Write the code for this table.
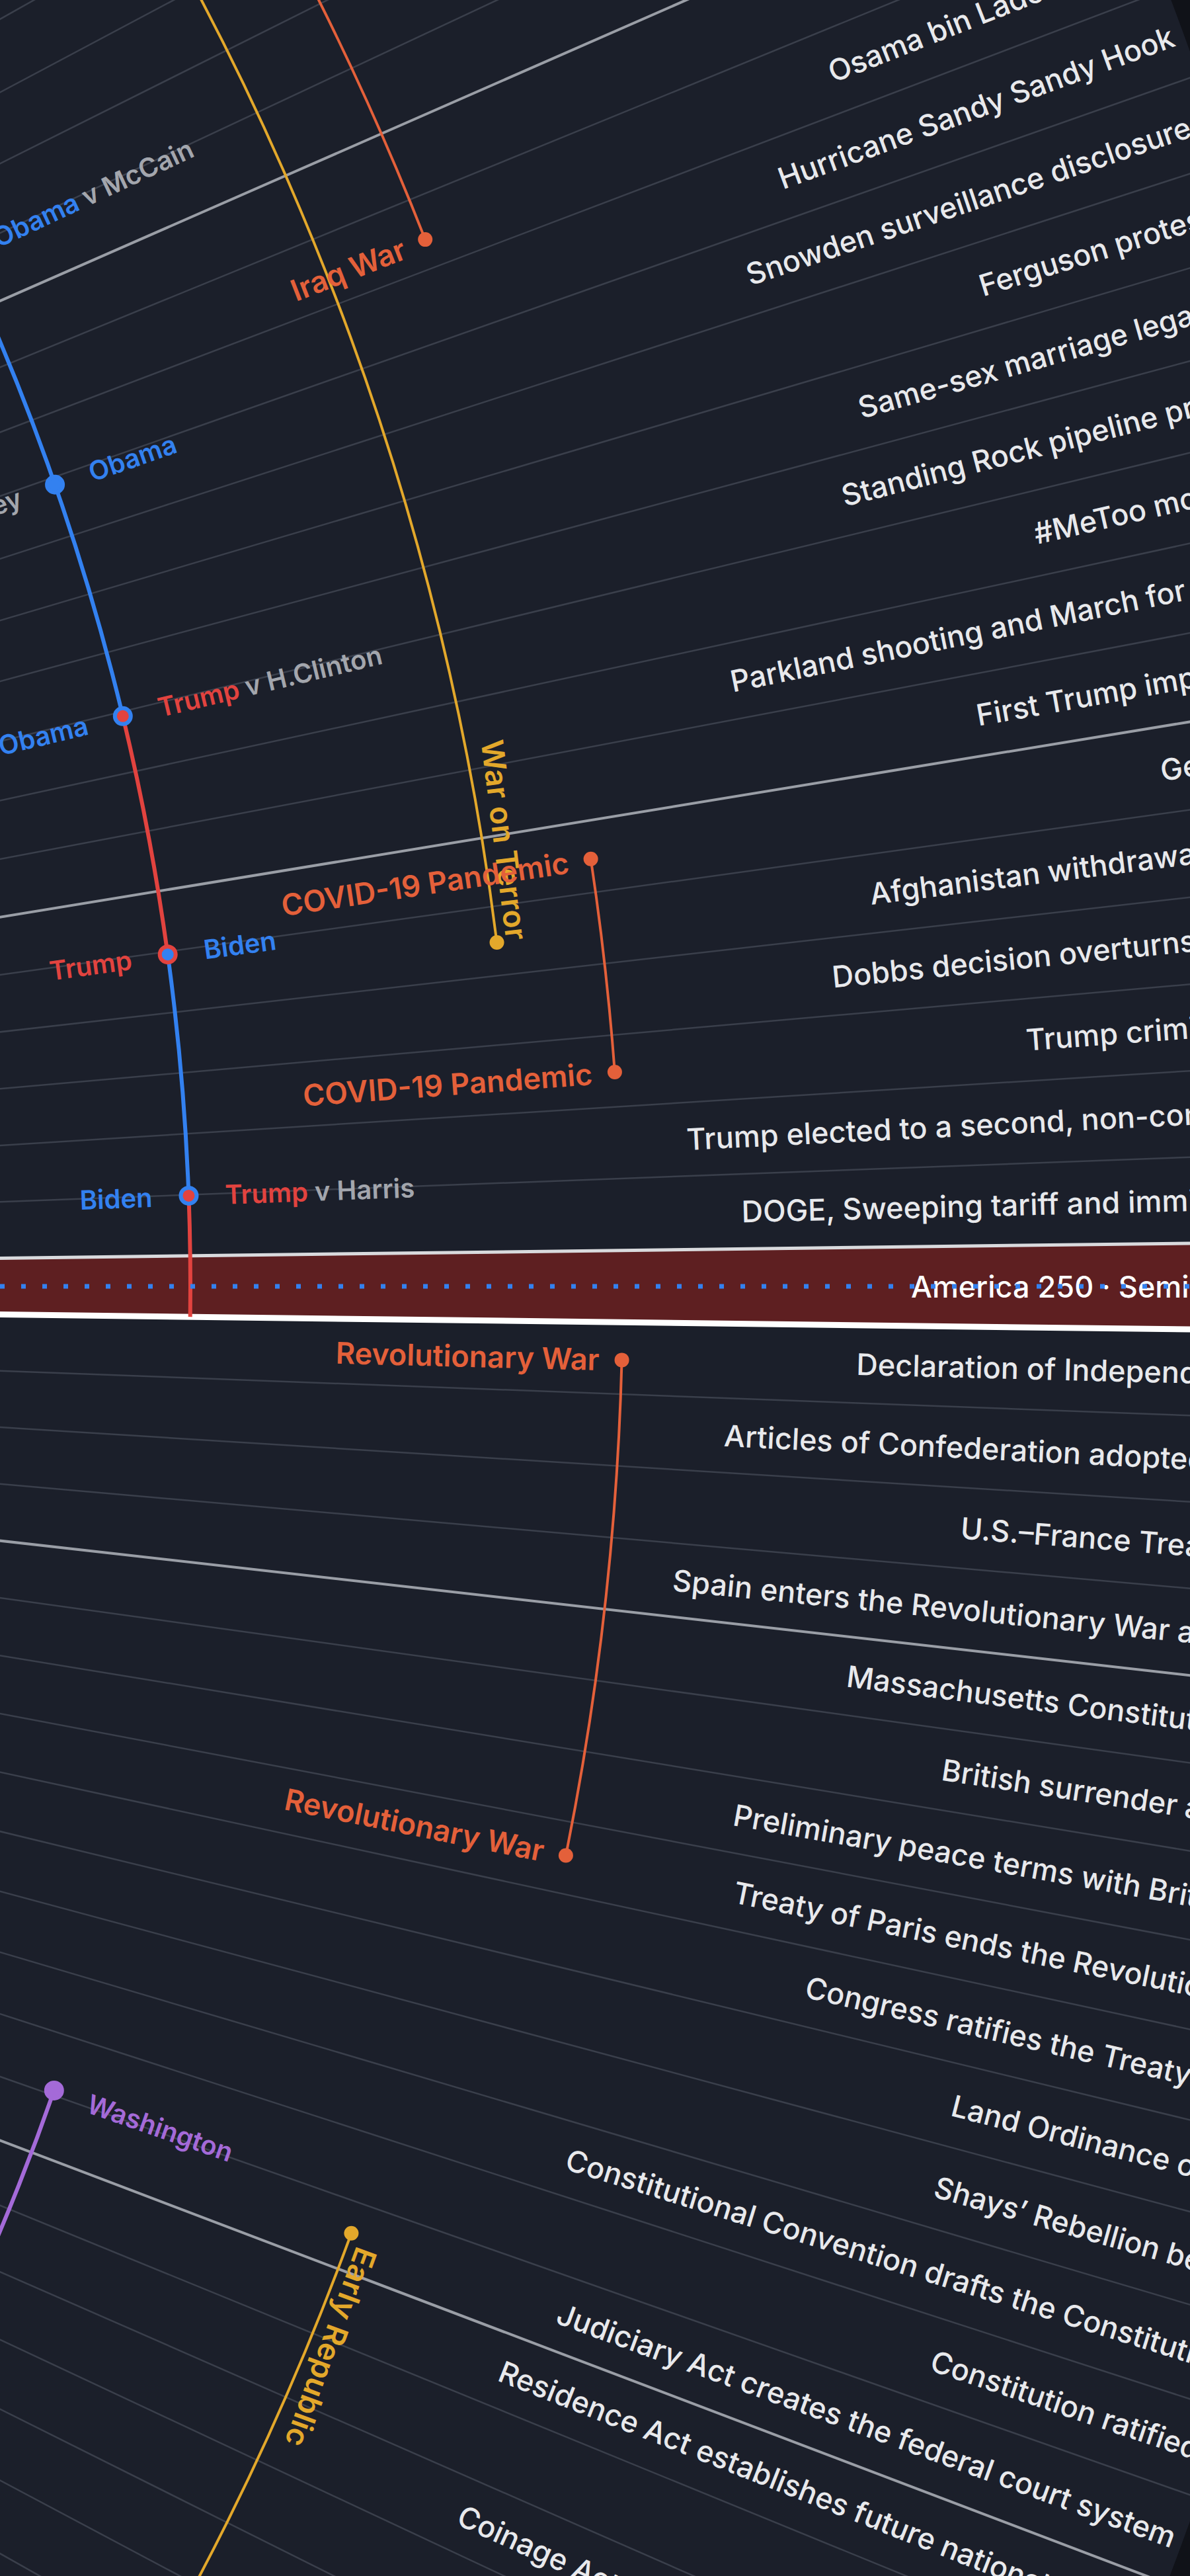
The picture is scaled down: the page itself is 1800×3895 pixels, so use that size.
import React from 'react'

// Radial timeline: one slot per year (1776 → 2026) laid around a circle whose
// centre sits far off-screen to the left. 2026 is the red "band" at angle 0.
const CX = -3400
const CY = 1945
const STEP = 360 / 251
const R_OUTER = 5525
const R_INNER = 1800
const R_PRES = 3688
const R_WAR = 4342
const R_ERA = 4184

const BLUE = '#3381f0'
const RED = '#e2433f'
const WAR = '#e4603a'
const ERA = '#e3a82b'
const PURPLE = '#a46ad8'

// continuous time -> angle (deg), 0 = middle of the 2026 band, negative = above
function ang(t: number) {
  let a = (t - 2026.5) * STEP
  if (a < -180) a += 360
  return a
}

function pt(r: number, deg: number): [number, number] {
  const rad = (deg * Math.PI) / 180
  return [CX + r * Math.cos(rad), CY + r * Math.sin(rad)]
}

function arc(r: number, a1: number, a2: number) {
  const [x1, y1] = pt(r, a1)
  const [x2, y2] = pt(r, a2)
  return `M${x1} ${y1} A${r} ${r} 0 0 1 ${x2} ${y2}`
}

type Ev = { year: number; text: string; r: number }

const EVENTS: Ev[] = [
  { year: 2011, text: 'Osama bin Laden killed', r: 5003 },
  { year: 2012, text: 'Hurricane Sandy Sandy Hook', r: 4875 },
  { year: 2013, text: 'Snowden surveillance disclosures', r: 4781 },
  { year: 2014, text: 'Ferguson protests', r: 5111 },
  { year: 2015, text: 'Same-sex marriage legalized nationwide', r: 4883 },
  { year: 2016, text: 'Standing Rock pipeline protests', r: 4824 },
  { year: 2017, text: '#MeToo movement', r: 5093 },
  { year: 2018, text: 'Parkland shooting and March for Our Lives', r: 4597 },
  { year: 2019, text: 'First Trump impeachment', r: 4953 },
  { year: 2020, text: 'George Floyd protests', r: 5214 },
  { year: 2021, text: 'Afghanistan withdrawal', r: 4753 },
  { year: 2022, text: 'Dobbs decision overturns Roe v. Wade', r: 4682 },
  { year: 2023, text: 'Trump criminal indictments', r: 4966 },
  { year: 2024, text: 'Trump elected to a second, non-consecutive term', r: 4444 },
  { year: 2025, text: 'DOGE, Sweeping tariff and immigration actions', r: 4523 },
  { year: 1776, text: 'Declaration of Independence', r: 4697 },
  { year: 1777, text: 'Articles of Confederation adopted', r: 4501 },
  { year: 1778, text: 'U.S.–France Treaty of Alliance', r: 4867 },
  { year: 1779, text: 'Spain enters the Revolutionary War against Britain', r: 4440 },
  { year: 1780, text: 'Massachusetts Constitution', r: 4718 },
  { year: 1781, text: 'British surrender at Yorktown', r: 4880 },
  { year: 1782, text: 'Preliminary peace terms with Britain', r: 4580 },
  { year: 1783, text: 'Treaty of Paris ends the Revolutionary War', r: 4602 },
  { year: 1784, text: 'Congress ratifies the Treaty of Paris', r: 4739 },
  { year: 1785, text: 'Land Ordinance of 1785', r: 4996 },
  { year: 1786, text: 'Shays’ Rebellion begins', r: 5003 },
  { year: 1787, text: 'Constitutional Convention drafts the Constitution', r: 4457 },
  { year: 1788, text: 'Constitution ratified', r: 5076 },
  { year: 1789, text: 'Judiciary Act creates the federal court system', r: 4519 },
  { year: 1790, text: 'Residence Act establishes future national capital', r: 4468 },
  { year: 1792, text: 'Coinage Act establishes the U.S. Mint', r: 4496 },
]

// president ring: colour of each term
const TERMS: [number, number, string][] = [
  [-40, -25.03, RED],
  [-25.03, -13.52, BLUE],
  [-13.52, -7.82, RED],
  [-7.82, -2.13, BLUE],
  [-2.13, ang(2027), RED],
  [19.25, 40, PURPLE],
]

// inaugurations: angle, fill, ring
const INAUGURATIONS: [number, string, string][] = [
  [-25.03, BLUE, RED],
  [-19.19, BLUE, BLUE],
  [-13.52, RED, BLUE],
  [-7.82, BLUE, RED],
  [-2.13, RED, BLUE],
  [19.25, PURPLE, PURPLE],
]

type Part = [string, string]
const RIGHT_LABELS: [number, Part[]][] = [
  [-25.03, [['Obama', BLUE], [' v McCain', '#a3a6ad']]],
  [-19.19, [['Obama', BLUE]]],
  [-13.52, [['Trump', RED], [' v H.Clinton', '#a3a6ad']]],
  [-7.82, [['Biden', BLUE]]],
  [-2.13, [['Trump', RED], [' v Harris', '#a3a6ad']]],
  [19.25, [['Washington', PURPLE]]],
]
const LEFT_LABELS: [number, Part[]][] = [
  [-19.19, [['v Romney', '#a3a6ad']]],
  [-13.52, [['Obama', BLUE]]],
  [-7.82, [['Trump', RED]]],
  [-2.13, [['Biden', BLUE]]],
]

// wars: start angle, end angle, label, whether the start is on screen
const WARS: [number, number, string, boolean][] = [
  [-40, -21.38, 'Iraq War', false],
  [-8.56, -4.28, 'COVID-19 Pandemic', true],
  [1.47, 11.43, 'Revolutionary War', true],
]

function RadialText({
  r,
  a,
  anchor = 'start',
  className,
  children,
}: {
  r: number
  a: number
  anchor?: 'start' | 'end' | 'middle'
  className?: string
  children: React.ReactNode
}) {
  const [x, y] = pt(r, a)
  return (
    <text
      x={x}
      y={y}
      textAnchor={anchor}
      dominantBaseline="central"
      transform={`rotate(${a} ${x} ${y})`}
      className={className}
    >
      {children}
    </text>
  )
}

function TangentText({
  r,
  a,
  anchor,
  children,
}: {
  r: number
  a: number
  anchor: 'start' | 'end'
  children: React.ReactNode
}) {
  const [x, y] = pt(r, a)
  return (
    <text
      x={x}
      y={y}
      textAnchor={anchor}
      transform={`rotate(${a + 90} ${x} ${y})`}
      className="fill-[#e3a82b] text-[46px] font-semibold"
    >
      {children}
    </text>
  )
}

export default function App() {
  const grid: { a: number; decade: boolean }[] = []
  for (let y = 1777; y <= 2025; y++) {
    const a = ang(y)
    if (Math.abs(a) < 40) grid.push({ a, decade: y % 10 === 0 })
  }

  const top = ang(2026)
  const bottom = ang(2027)
  const [b1x, b1y] = pt(R_INNER, top)
  const [b2x, b2y] = pt(R_OUTER, top)
  const [b3x, b3y] = pt(R_OUTER, bottom)
  const [b4x, b4y] = pt(R_INNER, bottom)

  return (
    <div className="w-[1800px] h-[3895px] overflow-hidden bg-[#101218] font-[Inter,'Liberation_Sans',sans-serif]">
      <svg width={1800} height={3895} viewBox="0 0 1800 3895" className="block">
        <circle cx={CX} cy={CY} r={R_OUTER} fill="#1b1f2a" />

        {/* 2026 band */}
        <path
          d={`M${b1x} ${b1y} L${b2x} ${b2y} A${R_OUTER} ${R_OUTER} 0 0 1 ${b3x} ${b3y} L${b4x} ${b4y} Z`}
          fill="#5e1f21"
        />

        {/* year spokes */}
        {grid.map(({ a, decade }) => {
          const [x1, y1] = pt(R_INNER, a)
          const [x2, y2] = pt(R_OUTER, a)
          return (
            <line
              key={a}
              x1={x1}
              y1={y1}
              x2={x2}
              y2={y2}
              stroke={decade ? '#9a9ea6' : '#3a3f4b'}
              strokeWidth={decade ? 4 : 2.5}
            />
          )
        })}
        <line x1={b1x} y1={b1y} x2={b2x} y2={b2y} stroke="#d9dadd" strokeWidth={5} />
        <line x1={b4x} y1={b4y} x2={b3x} y2={b3y} stroke="#ffffff" strokeWidth={9} />

        {/* eras */}
        <path d={arc(R_ERA, -40, -7.14)} stroke={ERA} strokeWidth={4} fill="none" />
        <circle cx={pt(R_ERA, -7.14)[0]} cy={pt(R_ERA, -7.14)[1]} r={11} fill={ERA} />
        <TangentText r={R_ERA + 14} a={-7.14} anchor="end">
          War on Terror
        </TangentText>
        <path d={arc(R_ERA, 20.01, 40)} stroke={ERA} strokeWidth={4} fill="none" />
        <circle cx={pt(R_ERA, 20.01)[0]} cy={pt(R_ERA, 20.01)[1]} r={11} fill={ERA} />
        <TangentText r={R_ERA + 14} a={20.2} anchor="start">
          Early Republic
        </TangentText>

        {/* wars */}
        {WARS.map(([a1, a2, label, startVisible]) => (
          <g key={label}>
            <path d={arc(R_WAR, a1, a2)} stroke={WAR} strokeWidth={4} fill="none" />
            {(startVisible ? [a1, a2] : [a2]).map(a => {
              const [x, y] = pt(R_WAR, a)
              return (
                <g key={a}>
                  <circle cx={x} cy={y} r={11} fill={WAR} />
                  <RadialText r={R_WAR - 34} a={a} anchor="end" className="fill-[#e4603a] text-[45px] font-semibold">
                    {label}
                  </RadialText>
                </g>
              )
            })}
          </g>
        ))}

        {/* presidents ring */}
        {TERMS.map(([a1, a2, color]) => (
          <path key={a1} d={arc(R_PRES, a1, a2)} stroke={color} strokeWidth={6} fill="none" />
        ))}
        {INAUGURATIONS.map(([a, fill, ring]) => {
          const [x, y] = pt(R_PRES, a)
          return <circle key={a} cx={x} cy={y} r={12} fill={fill} stroke={ring} strokeWidth={6} />
        })}
        {RIGHT_LABELS.map(([a, parts]) => (
          <RadialText key={a} r={R_PRES + 55} a={a} className="text-[40px] font-semibold">
            {parts.map(([t, c]) => (
              <tspan key={t} fill={c}>
                {t}
              </tspan>
            ))}
          </RadialText>
        ))}
        {LEFT_LABELS.map(([a, parts]) => (
          <RadialText key={a} r={R_PRES - 55} a={a} anchor="end" className="text-[40px] font-semibold">
            {parts.map(([t, c]) => (
              <tspan key={t} fill={c}>
                {t}
              </tspan>
            ))}
          </RadialText>
        ))}

        {/* events */}
        {EVENTS.map(ev => (
          <RadialText
            key={ev.year}
            r={ev.r}
            a={ang(ev.year + 0.5)}
            className="fill-[#e8e9ec] text-[45px] font-medium"
          >
            {ev.text}
          </RadialText>
        ))}
        <RadialText r={4778} a={0} className="fill-white text-[45px] font-medium">
          America 250 · Semiquincentennial
        </RadialText>

        {/* today marker */}
        <line
          x1={pt(R_INNER, 0)[0]}
          y1={CY}
          x2={pt(R_OUTER, 0)[0]}
          y2={CY}
          stroke={BLUE}
          strokeWidth={7}
          strokeDasharray="7 25"
        />
      </svg>
    </div>
  )
}
